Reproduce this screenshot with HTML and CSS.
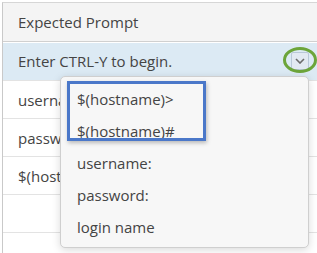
FILE: index.html
```html
<!DOCTYPE html>
<html lang="en">
<head>
    <meta charset="UTF-8">
    <title>Expected Prompt</title>
    <link rel="stylesheet" href="styles.css">
</head>
<body>
<div class="screen">
    <div class="grid">
        <div class="grid-head">Expected Prompt</div>
        <div class="row selected">
            <span>Enter CTRL-Y to begin.</span>
        </div>
        <div class="row">username:</div>
        <div class="row">password:</div>
        <div class="row">$(hostname)#</div>
        <div class="row"></div>
        <div class="row"></div>
    </div>

    <button class="toggle" type="button">
        <svg width="10" height="6" viewBox="0 0 10 6"><polyline points="1,1 5,5 9,1" fill="none" stroke="#6b6b6b" stroke-width="1.6"/></svg>
    </button>

    <!-- callout round the toggle -->
    <div class="ring"></div>

    <ul class="menu">
        <li>$(hostname)&gt;</li>
        <li>$(hostname)#</li>
        <li>username:</li>
        <li>password:</li>
        <li>login name</li>
    </ul>

    <!-- callout round the first two choices -->
    <div class="mark"></div>
</div>
</body>
</html>
```

FILE: styles.css
```css
* {
    margin: 0;
    padding: 0;
    box-sizing: border-box;
}

body {
    font-family: "Open Sans", "Liberation Sans", sans-serif;
    font-size: 15px;
    color: #444;
    background: #fff;
    overflow: hidden;
}

.screen {
    position: relative;
    width: 317px;
    height: 253px;
    padding: 2px 0 0 2px;
    overflow: hidden;
}

.grid {
    width: 330px;
    border-left: 1px solid #c9c9c9;
    border-top: 1px solid #d6d6d6;
}

.grid-head {
    height: 39px;
    padding-left: 15px;
    line-height: 38px;
    background: #f4f4f4;
    border-bottom: 1px solid #d0d0d0;
}

.row {
    display: flex;
    align-items: center;
    height: 38px;
    padding-left: 15px;
    border-bottom: 1px solid #e3e3e3;
    white-space: nowrap;
}

.row.selected {
    height: 39px;
    background: #dceaf4;
    box-shadow: inset 0 1px #fff;
}

.toggle {
    position: absolute;
    left: 291px;
    top: 52px;
    width: 18px;
    height: 18px;
    display: flex;
    align-items: center;
    justify-content: center;
    background: #e2e9f2;
    border: 1px solid #b9c8d8;
    border-radius: 2px;
}

.ring {
    position: absolute;
    left: 283px;
    top: 47px;
    width: 34px;
    height: 26px;
    border: 3px solid #6ca53a;
    border-radius: 50%;
}

.menu {
    position: absolute;
    left: 60px;
    top: 76px;
    width: 249px;
    height: 172px;
    padding: 6px 0;
    list-style: none;
    background: #f7f7f7;
    border: 1px solid #cfcfcf;
    border-radius: 5px;
    box-shadow: 0 2px 8px rgba(0, 0, 0, 0.15);
}

.menu li {
    height: 32px;
    line-height: 32px;
    padding-left: 16px;
    color: #444;
}

.mark {
    position: absolute;
    left: 67px;
    top: 81px;
    width: 139px;
    height: 60px;
    border: 3px solid #4b78c9;
    box-shadow: 1px 2px 4px rgba(0, 0, 0, 0.25);
}
```
